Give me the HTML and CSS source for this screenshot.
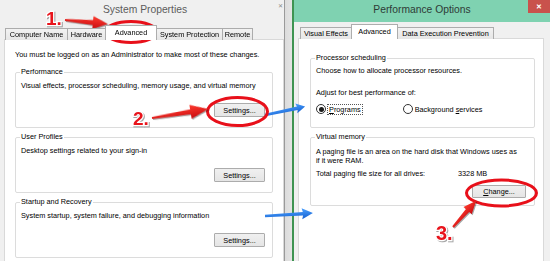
FILE: index.html
```html
<!DOCTYPE html>
<html lang="en">
<head>
<meta charset="utf-8">
<title>System Properties / Performance Options</title>
<link rel="stylesheet" href="styles.css">
</head>
<body>
<div class="screen">
  <section class="win sys">
    <header class="titlebar sys-title">
      <span class="title">System Properties</span>
      <span class="ghost-close">&#x2715;</span>
    </header>
    <div class="body">
      <nav class="tabs">
        <span class="tab t-cn">Computer Name</span>
        <span class="tab t-hw">Hardware</span>
        <span class="tab active t-adv">Advanced</span>
        <span class="tab t-sp">System Protection</span>
        <span class="tab t-rm">Remote</span>
      </nav>
      <div class="panel">
        <p class="note">You must be logged on as an Administrator to make most of these changes.</p>
        <fieldset class="group lgroup">
          <legend>Performance</legend>
          <p class="line">Visual effects, processor scheduling, memory usage, and virtual memory</p>
          <div class="actions"><span class="btn">Settings...</span></div>
        </fieldset>
        <fieldset class="group lgroup">
          <legend>User Profiles</legend>
          <p class="line">Desktop settings related to your sign-in</p>
          <div class="actions"><span class="btn">Settings...</span></div>
        </fieldset>
        <fieldset class="group lgroup">
          <legend>Startup and Recovery</legend>
          <p class="line">System startup, system failure, and debugging information</p>
          <div class="actions"><span class="btn">Settings...</span></div>
        </fieldset>
      </div>
    </div>
  </section>

  <div class="rift"></div>

  <section class="win perf">
    <header class="titlebar perf-title">
      <span class="title">Performance Options</span>
      <span class="close">&#x2715;</span>
    </header>
    <div class="body">
      <nav class="tabs">
        <span class="tab t-ve">Visual Effects</span>
        <span class="tab active t-adv2">Advanced</span>
        <span class="tab t-dep">Data Execution Prevention</span>
      </nav>
      <div class="panel">
        <fieldset class="group rgroup sched">
          <legend>Processor scheduling</legend>
          <p class="line">Choose how to allocate processor resources.</p>
          <p class="line adjust">Adjust for best performance of:</p>
          <div class="radios">
            <span class="radio-item focus"><span class="radio checked"></span><span class="rlabel"><u>P</u>rograms</span></span>
            <span class="radio-item bg"><span class="radio"></span><span class="rlabel">Background <u>s</u>ervices</span></span>
          </div>
        </fieldset>
        <fieldset class="group rgroup vmem">
          <legend>Virtual memory</legend>
          <p class="para">A paging file is an area on the hard disk that Windows uses as<br>if it were RAM.</p>
          <div class="total"><span class="tlabel">Total paging file size for all drives:</span><span>3328 MB</span></div>
          <div class="actions"><span class="btn change"><u>C</u>hange...</span></div>
        </fieldset>
      </div>
    </div>
  </section>

  <svg class="marks" width="550" height="261" viewBox="0 0 550 261">
    <defs>
      <linearGradient id="redg" x1="0" y1="0" x2="0" y2="1">
        <stop offset="0" stop-color="#ff3a2e"/>
        <stop offset="1" stop-color="#c80c10"/>
      </linearGradient>
      <linearGradient id="blueg" x1="0" y1="0" x2="0" y2="1">
        <stop offset="0" stop-color="#4aa0ff"/>
        <stop offset="1" stop-color="#1560d0"/>
      </linearGradient>
    </defs>
    <!-- blue arrows -->
    <g transform="translate(265 115) rotate(-12)">
      <polygon fill="url(#blueg)" points="0,-1.2 33,-1.8 32,-5 41,0 32,5 33,1.8 0,1.2"/>
    </g>
    <g transform="translate(265 216) rotate(-3.5)">
      <polygon fill="url(#blueg)" points="0,-1.2 38,-1.8 37,-5.5 48,0 37,5.5 38,1.8 0,1.2"/>
    </g>
    <!-- red ellipses -->
    <ellipse cx="131" cy="32" rx="26" ry="10.5" fill="none" stroke="#e8101a" stroke-width="3"/>
    <ellipse cx="237.5" cy="111.5" rx="30" ry="14" fill="none" stroke="#e8101a" stroke-width="3"/>
    <ellipse cx="501.5" cy="193" rx="35" ry="13" fill="none" stroke="#e8101a" stroke-width="3"/>
    <!-- red arrows -->
    <g class="shadowed">
      <g transform="translate(65 20) rotate(5.3)">
        <polygon fill="url(#redg)" points="0,-1 28,-2.5 28,-6.5 43,0 28,6.5 28,2.5 0,1"/>
      </g>
      <g transform="translate(152 118) rotate(-9.1)">
        <polygon fill="url(#redg)" points="0,-1 39,-2.5 39,-7 57,0 39,7 39,2.5 0,1"/>
      </g>
      <g transform="translate(453 227) rotate(-48.5)">
        <polygon fill="url(#redg)" points="0,-1 22,-2.2 22,-5.5 35,0 22,5.5 22,2.2 0,1"/>
      </g>
      <text class="num" x="46" y="25">1.</text>
      <text class="num" x="133" y="125">2.</text>
      <text class="num n3" x="436" y="240">3.</text>
    </g>
  </svg>
</div>
</body>
</html>
```

FILE: styles.css
```css
* { box-sizing: border-box; }
html, body { margin: 0; padding: 0; }
body {
  width: 550px;
  height: 261px;
  overflow: hidden;
  background: #f0f0f0;
  font-family: "Liberation Sans", Arial, sans-serif;
  font-size: 7.3px;
  color: #000;
}
p { margin: 0; }

.screen {
  position: relative;
  display: flex;
  width: 550px;
  height: 261px;
  overflow: hidden;
}

/* ---------- windows ---------- */
.win { display: flex; flex-direction: column; background: #f0f0f0; overflow: hidden; }
.sys { width: 284px; flex: none; position: relative; }
.rift {
  width: 8px;
  flex: none;
  background: linear-gradient(90deg, #9a9a9a 0, #9a9a9a 1px, #dcdcdc 1px, #e4e4e4 100%);
}
.perf { flex: 1; border-left: 2px solid #3f9452; position: relative; }

.titlebar {
  height: 26px;
  flex: none;
  display: flex;
  justify-content: center;
  align-items: flex-start;
  padding-top: 3px;
  position: relative;
}
.title { font-size: 10.3px; line-height: 14px; }
.sys-title { background: #f0f0f0; padding-left: 6px; }
.sys-title .title { color: #5c5c5c; }
.ghost-close {
  position: absolute;
  right: 1px;
  top: 2px;
  font-size: 6px;
  color: #8a8a8a;
}
.perf-title { background: #7fd2b1; height: 22px; margin-bottom: 3px; padding-left: 0; }
.perf-title .title { color: #2e3b36; }
.close {
  position: absolute;
  right: 0;
  top: 0;
  width: 22px;
  height: 13px;
  background: #c9524c;
  color: #fff;
  font-size: 7px;
  font-weight: bold;
  display: flex;
  align-items: center;
  justify-content: center;
}

.body { display: flex; flex-direction: column; flex: 1; }
.sys .body { padding-left: 4px; }
.perf .body { padding-left: 4px; padding-right: 6px; }

/* ---------- tabs ---------- */
.tabs {
  display: flex;
  align-items: flex-end;
  height: 14px;
  padding-left: 1px;
  margin-bottom: -1px;
  position: relative;
  z-index: 1;
}
.perf .tabs { padding-left: 2px; }
.tab {
  height: 12px;
  line-height: 11px;
  text-align: center;
  white-space: nowrap;
  border: 1px solid #acacac;
  border-bottom: none;
  background: linear-gradient(#f2f2f2, #e6e6e6);
  margin-right: -1px;
  color: #000;
}
.tab.active {
  height: 15px;
  line-height: 13px;
  background: #fff;
  border-color: #adadad;
  position: relative;
  z-index: 2;
}
.t-cn { width: 63px; }
.t-hw { width: 39px; }
.t-adv { width: 52px; }
.t-sp { width: 67px; }
.t-rm { width: 31px; }
.t-ve { width: 52px; }
.t-adv2 { width: 47px; }
.t-dep { width: 97px; }

.panel {
  flex: 1;
  background: #fff;
  border: 1px solid #d9d9d9;
  border-bottom: none;
}
.sys .panel { width: 280px; padding: 10px 10px 0 10px; }
.perf .panel { padding: 14px 8px 0 11px; }

.note { line-height: 10px; white-space: nowrap; margin-bottom: 7px; }

/* ---------- group boxes ---------- */
.group {
  margin: 0;
  min-width: 0;
  border: 1px solid #dcdcdc;
  border-radius: 2px;
  padding: 4px 7px 10px 5px;
}
.group legend {
  padding: 0 1px;
  margin-left: -1px;
  line-height: 10px;
  white-space: nowrap;
}
.line { line-height: 10px; white-space: nowrap; }
.lgroup { margin-bottom: 4px; }
.actions { display: flex; justify-content: flex-end; }
.lgroup .actions { margin-top: 12px; }

.btn {
  display: flex;
  align-items: center;
  justify-content: center;
  width: 51px;
  height: 14px;
  border: 1px solid #acacac;
  background: linear-gradient(#f0f0f0, #e5e5e5);
  border-radius: 1px;
}

/* right groups */
.rgroup { padding-right: 8px; }
.sched { padding-top: 3px; padding-bottom: 13px; margin-bottom: 4px; }
.sched .adjust { margin-top: 12px; }
.radios { display: flex; margin-top: 6px; height: 10px; align-items: center; }
.radio-item { display: flex; align-items: center; }
.radio-item.focus .rlabel { outline: 1px dotted #555; outline-offset: 0; padding: 0 1px; }
.radio-item.bg { margin-left: 41px; }
.radio {
  width: 10px;
  height: 10px;
  border: 1px solid #333;
  border-radius: 50%;
  background: #fff;
  margin-right: 2px;
  display: flex;
  align-items: center;
  justify-content: center;
}
.radio.checked::after {
  content: "";
  width: 5px;
  height: 5px;
  border-radius: 50%;
  background: #1a1a1a;
}
.rlabel { line-height: 9px; white-space: nowrap; }

.vmem { padding-top: 5px; padding-bottom: 7px; }
.para { line-height: 9px; white-space: nowrap; }
.total { display: flex; line-height: 10px; margin-top: 4px; white-space: nowrap; }
.tlabel { width: 142px; }
.vmem .actions { margin-top: 6px; }
.btn.change { width: 54px; height: 13px; }

/* ---------- annotations ---------- */
.marks {
  position: absolute;
  left: 0;
  top: 0;
  pointer-events: none;
}
.shadowed { filter: drop-shadow(1px 1px 0.6px rgba(0,0,0,0.35)); }
.num {
  font-family: "Liberation Sans", Arial, sans-serif;
  font-weight: bold;
  font-size: 19px;
  fill: #e8141c;
  stroke: #fff;
  stroke-width: 2.5px;
  paint-order: stroke;
}
.num.n3 { font-size: 20px; }
```
